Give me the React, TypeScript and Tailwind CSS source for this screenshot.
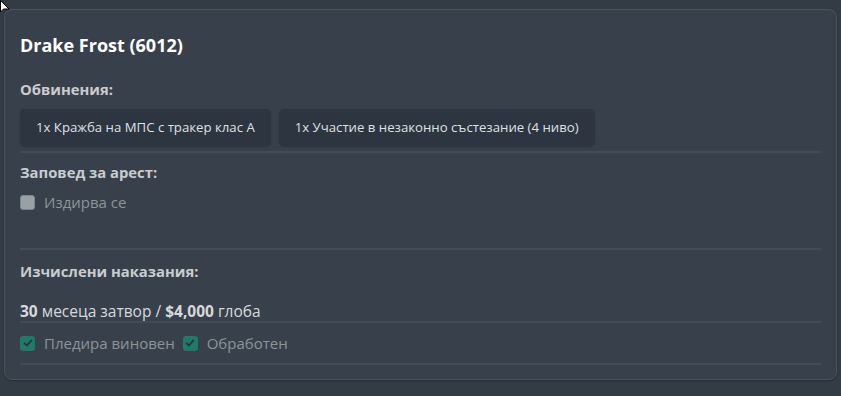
import React from "react";

const charges = [
  "1x Кражба на МПС с тракер клас А",
  "1x Участие в незаконно състезание (4 ниво)",
];

const Check = ({ checked, label }: { checked: boolean; label: string }) => (
  <label className="flex items-center gap-[9px]">
    {checked ? (
      <span className="flex h-[15px] w-[15px] items-center justify-center rounded-[3px] bg-[#1f7a69]">
        <svg viewBox="0 0 16 16" className="h-[12px] w-[12px]" fill="none">
          <path
            d="M3.5 8.5l3 3 6-7"
            stroke="#2c3440"
            strokeWidth={2.4}
            strokeLinecap="round"
            strokeLinejoin="round"
          />
        </svg>
      </span>
    ) : (
      <span className="h-[15px] w-[15px] rounded-[3px] border border-[#7d848b] bg-[#9aa0a6]" />
    )}
    <span className="text-[15px] leading-[20px] text-[#8d949b]">{label}</span>
  </label>
);

export default function App() {
  return (
    <div
      className="relative min-h-[396px] bg-[#333b45] px-[4px] pt-[9px]"
      style={{ fontFamily: '"Open Sans", "Noto Sans", sans-serif' }}
    >
      {/* mouse cursor */}
      <svg className="absolute left-0 top-0 h-[14px] w-[10px]" viewBox="0 0 10 14">
        <path d="M0.5 0.5 L0.5 12 L3.5 9 L9 9 Z" fill="white" stroke="black" strokeWidth={1} />
      </svg>

      <div className="rounded-[8px] border border-[#4a525c] bg-[#38414b] px-[15px] pb-[14px] pt-[23px] shadow-[0_1px_2px_rgba(0,0,0,0.25)]">
        <h2 className="text-[18px] font-bold leading-[24px] text-white">
          Drake Frost (6012)
        </h2>

        <div className="mt-[22px] text-[14.8px] font-bold leading-[20px] text-[#c9ccd0]">
          Обвинения:
        </div>
        <div className="mt-[10px] flex gap-[8px] border-b-2 border-[#434c56] pb-[5px]">
          {charges.map((c) => (
            <div
              key={c}
              className="rounded-[5px] bg-[#2c3540] px-[16px] py-[9px] text-[13.2px] leading-[19px] text-[#dfe1e3] shadow-[0_1px_2px_rgba(0,0,0,0.2)]"
            >
              {c}
            </div>
          ))}
        </div>

        <div className="mt-[9px] text-[14.8px] font-bold leading-[20px] text-[#c9ccd0]">
          Заповед за арест:
        </div>
        <div className="mt-[10px] border-b-2 border-[#434c56] pb-[36px]">
          <Check checked={false} label="Издирва се" />
        </div>

        <div className="mt-[11px] text-[14.8px] font-bold leading-[20px] text-[#c9ccd0]">
          Изчислени наказания:
        </div>
        <div className="mt-[20px] border-b-2 border-[#434c56] text-[15.5px] leading-[20px] text-[#d6d9dc]">
          <b>30</b> месеца затвор / <b>$4,000</b> глоба
        </div>
        <div className="flex gap-[8px] border-b-2 border-[#434c56] pb-[10px] pt-[10px]">
          <Check checked label="Пледира виновен" />
          <Check checked label="Обработен" />
        </div>
      </div>
    </div>
  );
}
